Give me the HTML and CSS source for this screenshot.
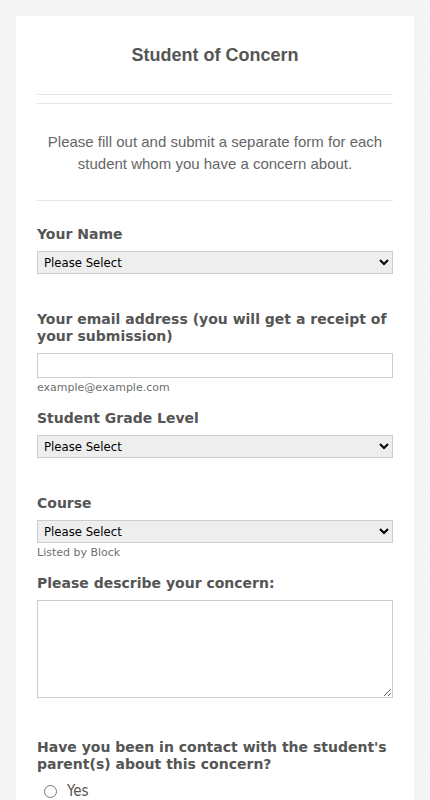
FILE: index.html
```html
<!doctype html>
<html lang="en">
<head>
  <meta charset="UTF-8">
  <meta name="viewport" content="width=device-width, initial-scale=1.0">
  <title>Student of Concern</title>
  <link rel="stylesheet" href="styles.css">
</head>
<body>
<form class="form">
  <div class="form__header">
    <h1 class="form__title">Student of Concern</h1>
  </div>

  <p class="form__intro">
    Please fill out and submit a separate form for each student whom you have a concern about.
  </p>

  <div class="form__fields">
    <div class="field">
      <label class="field__label" for="name">Your Name</label>
      <select class="field__select" id="name">
        <option>Please Select</option>
      </select>
    </div>

    <div class="field field--hinted">
      <label class="field__label" for="email">Your email address (you will get a receipt of your submission)</label>
      <input class="field__input" id="email" type="email">
      <span class="field__hint">example@example.com</span>
    </div>

    <div class="field">
      <label class="field__label" for="grade">Student Grade Level</label>
      <select class="field__select" id="grade">
        <option>Please Select</option>
      </select>
    </div>

    <div class="field field--hinted">
      <label class="field__label" for="course">Course</label>
      <select class="field__select" id="course">
        <option>Please Select</option>
      </select>
      <span class="field__hint">Listed by Block</span>
    </div>

    <div class="field">
      <label class="field__label" for="concern">Please describe your concern:</label>
      <textarea class="field__area" id="concern"></textarea>
    </div>

    <div class="field">
      <span class="field__label">Have you been in contact with the student's parent(s) about this concern?</span>
      <label class="choice">
        <input class="choice__input" type="radio" name="contact">
        Yes
      </label>
    </div>
  </div>
</form>
</body>
</html>
```

FILE: styles.css
```css
body {
  margin: 0;
  padding: 16px 16px 0;
  font-family: "DejaVu Sans", Verdana, sans-serif;
  background-color: #f4f4f4;
  background-image: repeating-linear-gradient(45deg, #f2f2f2 0 1px, #f6f6f6 1px 3px);
}

.form {
  background: #fff;
  padding: 0 21px 40px;
}

/* Header */

.form__header {
  padding: 28px 0 28px;
  border-bottom: 1px solid #e6e6e6;
  text-align: center;
}

.form__title {
  margin: 0;
  font: bold 18px/22px "Liberation Sans", Arial, sans-serif;
  color: #555;
}

.form__intro {
  margin: 8px 0 0;
  padding: 27px 0 25px;
  border-top: 1px solid #e6e6e6;
  border-bottom: 1px solid #e6e6e6;
  text-align: center;
  font: 15px/22px "Liberation Sans", Arial, sans-serif;
  color: #666;
}

/* Fields */

.form__fields {
  padding-top: 10px;
}

.field {
  padding: 14px 0 22px;
}

/* fields with a hint under the control sit closer to the next one */
.field--hinted {
  padding-bottom: 0;
}

.field__label {
  display: block;
  padding-top: 1px;
  margin-bottom: 8px;
  font-size: 14px;
  line-height: 17px;
  font-weight: bold;
  color: #555;
}

.field__select,
.field__input,
.field__area {
  display: block;
  box-sizing: border-box;
  width: 100%;
  margin: 0;
  border: 1px solid #ccc;
  border-radius: 0;
  font: 13px "DejaVu Sans Condensed", Tahoma, sans-serif;
  color: #000;
}

.field__select {
  height: 23px;
  padding: 0 2px;
  background-color: #eee;
}

.field__input {
  height: 25px;
  padding: 0 6px;
  background: #fff;
}

.field__area {
  height: 98px;
  margin-bottom: 4px;
  padding: 4px 6px;
  background: #fff;
}

.field__hint {
  display: block;
  margin-top: 3px;
  font-size: 11px;
  line-height: 14px;
  color: #6f6f6f;
}

/* Radio */

.choice {
  display: flex;
  align-items: center;
  gap: 10px;
  margin-top: 6px;
  padding-left: 7px;
  font: 15px/20px "DejaVu Sans Condensed", Tahoma, sans-serif;
  color: #555;
}

.choice__input {
  width: 13px;
  height: 13px;
  margin: 0;
}
```
